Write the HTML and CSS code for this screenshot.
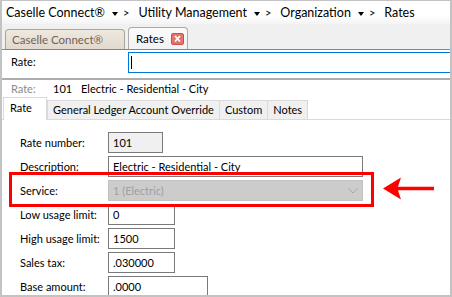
FILE: index.html
```html
<!DOCTYPE html>
<html lang="en">
<head>
  <meta charset="UTF-8">
  <title>Rates</title>
  <link rel="stylesheet" href="styles.css">
</head>
<body>
  <div class="window">
    <div class="crumbs">
      <span class="crumb">Caselle Connect®</span><span class="caret"></span><span class="sep">&gt;</span>
      <span class="crumb">Utility Management</span><span class="caret"></span><span class="sep">&gt;</span>
      <span class="crumb">Organization</span><span class="caret"></span><span class="sep">&gt;</span>
      <span class="crumb">Rates</span>
    </div>

    <div class="doc-tabs">
      <div class="doc-tab">Caselle Connect®</div>
      <div class="doc-tab active">Rates
        <svg class="close" width="13" height="12" viewBox="0 0 13 12">
          <rect x="0.5" y="0.5" width="12" height="11" rx="1.5" fill="#e5736b" stroke="#c9534b"/>
          <path d="M4 3 L9 8.5 M9 3 L4 8.5" stroke="#fff" stroke-width="1.8"/>
        </svg>
      </div>
    </div>

    <div class="lookup">
      <span class="lookup-label">Rate:</span>
      <div class="lookup-box"><span class="cursor"></span></div>
    </div>

    <div class="summary">
      <span class="summary-label">Rate:</span>
      <span class="summary-num">101</span>
      <span>Electric - Residential - City</span>
    </div>

    <div class="page-tabs">
      <div class="page-tab active">Rate</div>
      <div class="page-tab">General Ledger Account Override</div>
      <div class="page-tab">Custom</div>
      <div class="page-tab">Notes</div>
    </div>

    <div class="fields">
      <label>Rate number:</label>
      <div class="box readonly short">101</div>

      <label>Description:</label>
      <div class="box wide">Electric - Residential - City</div>

      <label>Service:</label>
      <div class="box wide disabled">1 (Electric)
        <svg class="chevron" width="10" height="6" viewBox="0 0 10 6">
          <path d="M0.5 0.5 L5 5 L9.5 0.5" fill="none" stroke="#a8a8a8"/>
        </svg>
      </div>

      <label>Low usage limit:</label>
      <div class="box mid">0</div>

      <label>High usage limit:</label>
      <div class="box mid">1500</div>

      <label>Sales tax:</label>
      <div class="box mid">.030000</div>

      <label>Base amount:</label>
      <div class="box long">.0000</div>
    </div>

    <div class="highlight"></div>
    <svg class="pointer" width="51" height="23" viewBox="0 0 51 23">
      <path d="M0 11.5 L18 0.5 L15 9.8 L51 9.8 L51 13.2 L15 13.2 L18 22.5 Z" fill="#ff0000"/>
    </svg>
  </div>
</body>
</html>
```

FILE: styles.css
```css
body {
  margin: 0;
  background: #fff;
  font-family: Lato, "Noto Sans", sans-serif;
  font-size: 11px;
  color: #000;
  white-space: nowrap;
}

.window {
  position: relative;
  width: 452px;
  height: 297px;
  box-sizing: border-box;
  border: 2px solid #c3c3c3;
  border-top-width: 1px;
  overflow: hidden;
  background: #fff;
}

/* breadcrumb */
.crumbs {
  display: flex;
  align-items: center;
  height: 23px;
  padding-left: 4px;
  font-size: 12.5px;
  background: linear-gradient(#fff, #fff 60%, #f4f4f4);
}

.crumb {
  margin-right: 7px;
}

.caret {
  width: 0;
  height: 0;
  border-left: 3.5px solid transparent;
  border-right: 3.5px solid transparent;
  border-top: 4px solid #000;
  margin-right: 5px;
  margin-top: 2px;
}

.sep {
  margin-right: 9px;
  font-size: 11px;
}

/* document tabs */
.doc-tabs {
  display: flex;
  align-items: flex-end;
  gap: 3px;
  height: 25px;
  padding-left: 3px;
  background: #f0f0f0;
  border-bottom: 1px solid #858585;
}

.doc-tab {
  display: flex;
  align-items: center;
  box-sizing: border-box;
  height: 20px;
  width: 120px;
  padding: 0 6px;
  border: 1px solid #aaa59c;
  border-bottom: none;
  border-radius: 4px 4px 0 0;
  background: linear-gradient(#eee8df, #e2d9cd);
  color: #6e6256;
  font-size: 11.5px;
}

.doc-tab.active {
  width: 60px;
  height: 22px;
  padding: 0 3px 0 7px;
  background: linear-gradient(#fbfbfb, #f2f2f2);
  color: #000;
  border-color: #aaa;
}

.close {
  margin-left: auto;
}

/* lookup row */
.lookup {
  display: flex;
  align-items: flex-start;
  height: 26px;
  padding-top: 2px;
  padding-left: 9px;
  border-bottom: 2px solid #adadad;
}

.lookup-label {
  width: 117px;
  line-height: 19px;
}

.lookup-box {
  flex: 1;
  height: 21px;
  box-sizing: border-box;
  border: 1px solid #0078d7;
  border-right: none;
  padding: 3px 2px;
}

.cursor {
  display: block;
  width: 1px;
  height: 13px;
  background: #000;
}

/* summary */
.summary {
  display: flex;
  align-items: center;
  height: 17px;
  padding-left: 9px;
}

.summary-label {
  color: #8a8a8a;
  width: 42px;
}

.summary-num {
  width: 28px;
}

/* page tabs */
.page-tabs {
  display: flex;
  align-items: flex-end;
  height: 22px;
  padding-left: 1px;
  border-bottom: 1px solid #dadada;
}

.page-tab {
  height: 19px;
  line-height: 18px;
  box-sizing: border-box;
  padding: 0 5px;
  border: 1px solid #d9d9d9;
  border-bottom: none;
  margin-left: -1px;
  background: #f0f0f0;
}

.page-tab.active {
  height: 23px;
  margin-bottom: -1px;
  width: 44px;
  padding: 1px 6px 0;
  background: #fff;
  margin-left: 0;
  margin-right: 1px;
}

/* form */
.fields {
  display: grid;
  grid-template-columns: 88px auto;
  grid-auto-rows: 21px;
  row-gap: 3px;
  justify-items: start;
  align-items: center;
  padding: 12px 0 0 18px;
}

.box {
  position: relative;
  height: 21px;
  box-sizing: border-box;
  border: 1px solid #7a7a7a;
  padding: 0 4px;
  line-height: 19px;
  background: #fff;
}

.short { width: 55px; }
.mid { width: 67px; }
.long { width: 100px; }
.wide { width: 255px; }

.readonly {
  background: #f0f0f0;
}

.disabled {
  background: #cccccc;
  border-color: #c2c2c2;
  color: #a0a0a0;
}

.chevron {
  position: absolute;
  right: 4px;
  top: 7px;
}

/* callout overlays */
.highlight {
  position: absolute;
  left: 7px;
  top: 171px;
  width: 365px;
  height: 35px;
  box-sizing: border-box;
  border: 3px solid #ff0000;
}

.pointer {
  position: absolute;
  left: 381px;
  top: 176px;
}
```
